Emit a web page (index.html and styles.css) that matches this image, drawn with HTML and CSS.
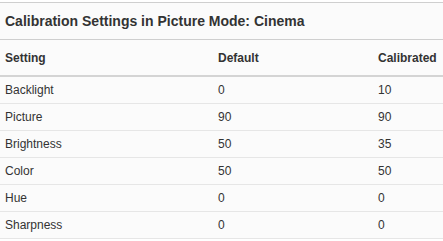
FILE: index.html
```html
<!DOCTYPE html>
<html>
<head>
<meta charset="utf-8">
<link rel="stylesheet" href="styles.css">
</head>
<body>
<div class="panel">
  <div class="caption">Calibration Settings in Picture Mode: Cinema</div>
  <table class="tbl">
    <thead>
      <tr><th>Setting</th><th>Default</th><th>Calibrated</th></tr>
    </thead>
    <tbody>
      <tr><td>Backlight</td><td>0</td><td>10</td></tr>
      <tr><td>Picture</td><td>90</td><td>90</td></tr>
      <tr><td>Brightness</td><td>50</td><td>35</td></tr>
      <tr><td>Color</td><td>50</td><td>50</td></tr>
      <tr><td>Hue</td><td>0</td><td>0</td></tr>
      <tr><td>Sharpness</td><td>0</td><td>0</td></tr>
    </tbody>
  </table>
</div>
</body>
</html>
```
FILE: styles.css
```css
html, body {
  margin: 0;
  padding: 0;
  background: #ffffff;
}
body {
  font-family: "Liberation Sans", Arial, sans-serif;
  color: #333333;
}
.panel {
  margin-top: 2px;
  background: #fbfbfb;
  border-top: 1px solid #cfcfcf;
}
.caption {
  height: 36px;
  line-height: 36px;
  padding-left: 5px;
  font-size: 14px;
  font-weight: bold;
  color: #333333;
  border-bottom: 1px solid #cfcfcf;
}
.tbl {
  width: 100%;
  border-collapse: collapse;
  table-layout: fixed;
}
.tbl th, .tbl td {
  text-align: left;
  padding: 0 0 0 5px;
  font-size: 12px;
}
.tbl th:nth-child(1), .tbl td:nth-child(1) { width: 208px; }
.tbl th:nth-child(2), .tbl td:nth-child(2) { width: 155px; }
.tbl th {
  height: 35px;
  font-weight: bold;
  border-bottom: 2px solid #d4d4d4;
}
.tbl td {
  height: 26px;
  border-bottom: 1px solid #e6e6e6;
}
```
